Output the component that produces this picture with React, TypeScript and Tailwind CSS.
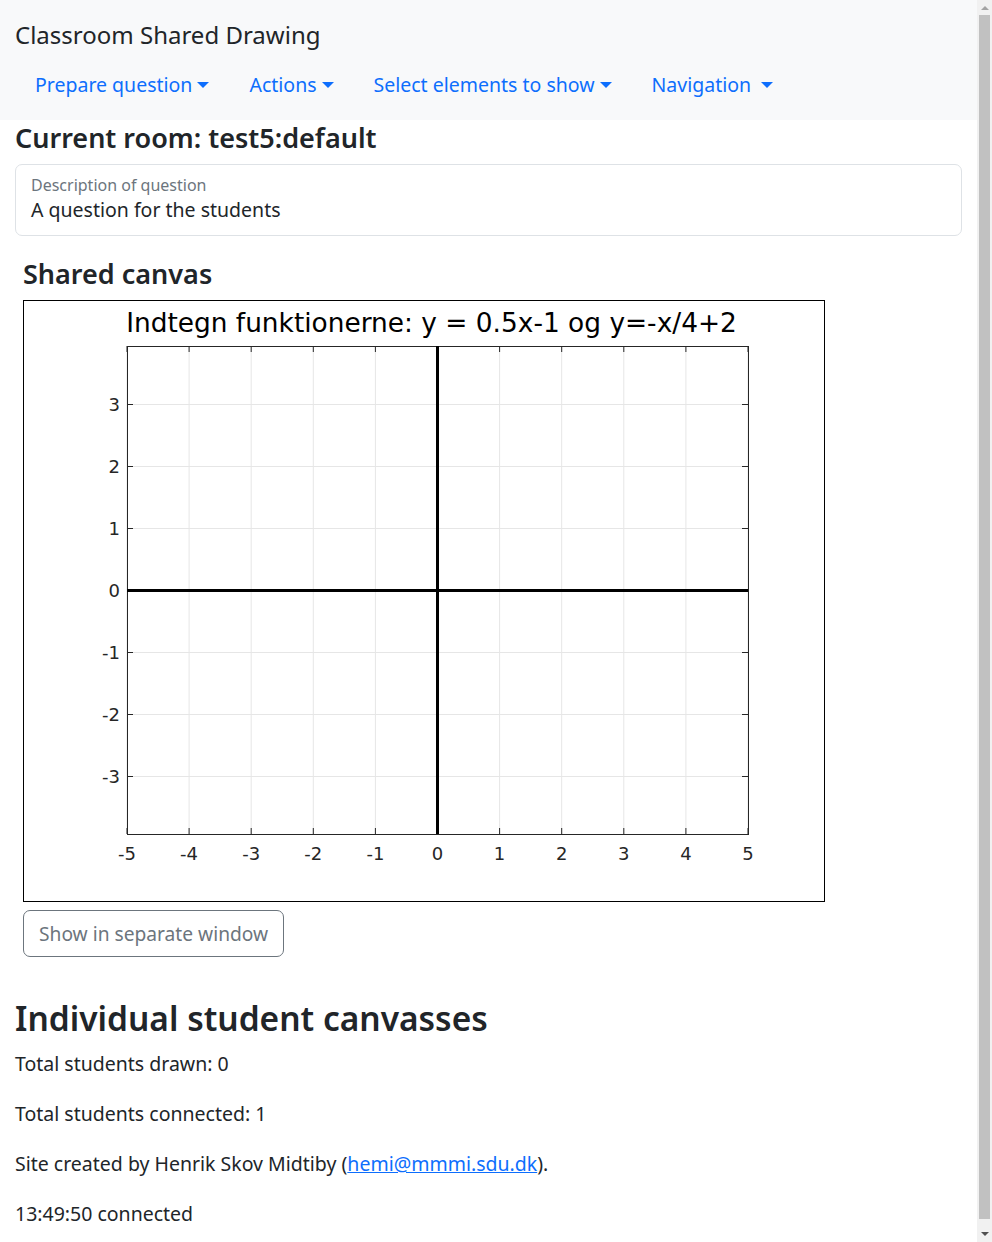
import React from "react";

const navItems = [
  { label: "Prepare question", wide: false },
  { label: "Actions", wide: false },
  { label: "Select elements to show", wide: false },
  { label: "Navigation", wide: true },
];

const X0 = 103;
const XSTEP = 62.1;
const Y0 = 289;
const YSTEP = 62;
const LEFT = 103;
const RIGHT = 724;
const TOP = 45;
const BOTTOM = 533;

const Chart = () => {
  const xs = Array.from({ length: 11 }, (_, i) => i - 5);
  const ys = [3, 2, 1, 0, -1, -2, -3];
  const tx = (v: number) => X0 + (v + 5) * XSTEP;
  const ty = (v: number) => Y0 - v * YSTEP;
  const font = "'DejaVu Sans', Verdana, sans-serif";

  return (
    <svg width="800" height="600" viewBox="0 0 800 600" className="block">
      <rect x="0" y="0" width="800" height="600" fill="#ffffff" />
      {/* grid */}
      {xs.map((v) => (
        <line key={"gx" + v} x1={tx(v)} y1={TOP} x2={tx(v)} y2={BOTTOM} stroke="#e6e6e6" strokeWidth="1" />
      ))}
      {ys.map((v) => (
        <line key={"gy" + v} x1={LEFT} y1={ty(v) + 0.5} x2={RIGHT} y2={ty(v) + 0.5} stroke="#e6e6e6" strokeWidth="1" />
      ))}
      {/* ticks */}
      {xs.map((v) => (
        <g key={"tx" + v}>
          <line x1={tx(v)} y1={BOTTOM} x2={tx(v)} y2={BOTTOM - 6} stroke="#262626" strokeWidth="1" />
          <line x1={tx(v)} y1={TOP} x2={tx(v)} y2={TOP + 6} stroke="#262626" strokeWidth="1" />
        </g>
      ))}
      {ys.map((v) => (
        <g key={"ty" + v}>
          <line x1={LEFT} y1={ty(v) + 0.5} x2={LEFT + 6} y2={ty(v) + 0.5} stroke="#262626" strokeWidth="1" />
          <line x1={RIGHT} y1={ty(v) + 0.5} x2={RIGHT - 6} y2={ty(v) + 0.5} stroke="#262626" strokeWidth="1" />
        </g>
      ))}
      {/* axes box */}
      <rect x={LEFT + 0.5} y={TOP + 0.5} width={RIGHT - LEFT} height={BOTTOM - TOP} fill="none" stroke="#262626" strokeWidth="1" />
      {/* x=0 and y=0 lines */}
      <line x1={LEFT} y1={Y0 + 0.5} x2={RIGHT} y2={Y0 + 0.5} stroke="#000000" strokeWidth="3" />
      <line x1={tx(0)} y1={TOP} x2={tx(0)} y2={BOTTOM} stroke="#000000" strokeWidth="3" />
      {/* labels */}
      {xs.map((v) => (
        <text key={"lx" + v} x={tx(v)} y={559} textAnchor="middle" fontFamily={font} fontSize="18" fill="#262626">
          {v}
        </text>
      ))}
      {ys.map((v) => (
        <text key={"ly" + v} x={96} y={ty(v) + 7} textAnchor="end" fontFamily={font} fontSize="18" fill="#262626">
          {v}
        </text>
      ))}
      <text x={407.5} y={31} textAnchor="middle" fontFamily={font} fontSize="26.4" fill="#000000">
        Indtegn funktionerne: y = 0.5x-1 og y=-x/4+2
      </text>
    </svg>
  );
};

// browser scrollbar as seen in the screenshot
const Scrollbar = () => (
  <div className="fixed top-0 right-0 w-[15px] h-[1242px] bg-[#f1f1f1] flex flex-col">
    <div className="h-[15px] flex items-center justify-center">
      <span className="w-0 h-0 border-b-[4px] border-b-[#a3a3a3] border-l-[4px] border-l-transparent border-r-[4px] border-r-transparent" />
    </div>
    <div className="mx-[2px] h-[1204px] bg-[#c1c1c1]" />
    <div className="flex-1 flex items-end justify-center pb-[6px]">
      <span className="w-0 h-0 border-t-[4px] border-t-[#505050] border-l-[4px] border-l-transparent border-r-[4px] border-r-transparent" />
    </div>
  </div>
);

const App = () => {
  return (
    <div className="bg-white text-[#212529] font-['Noto_Sans',sans-serif] text-[19.5px] leading-[1.5] pr-[15px]">
      <nav className="bg-[#f8f9fa] h-[120px] px-[15px]">
        <div className="pt-[16px] text-[24px] leading-[37px] text-[#212529]">Classroom Shared Drawing</div>
        <ul className="flex mt-[17px]">
          {navItems.map((item) => (
            <li key={item.label} className="px-[20px] leading-[30px] text-[#0d6efd]">
              {item.label}
              <span
                className={`inline-block align-[4px] w-0 h-0 border-t-[6px] border-t-[#0d6efd] border-l-[6px] border-l-transparent border-r-[6px] border-r-transparent ${
                  item.wide ? "ml-[10px]" : "ml-[5px]"
                }`}
              />
            </li>
          ))}
        </ul>
      </nav>

      <main className="px-[15px]">
        <h4 className="text-[27px] leading-[34px] font-semibold mt-[1px] mb-[9px]">Current room: test5:default</h4>

        <div className="border border-[#dee2e6] rounded-[7px] px-[15px] pt-[9px] pb-[11px]">
          <div className="text-[16px] leading-[22px] text-[#6c757d]">Description of question</div>
          <div className="leading-[28px]">A question for the students</div>
        </div>

        <section className="px-[8px] mt-[21px]">
          <h4 className="text-[27px] leading-[34px] font-semibold mb-[9px]">Shared canvas</h4>
          <div className="w-[802px] border border-black bg-white">
            <Chart />
          </div>
          <button className="mt-[8px] h-[47px] border border-[#6c757d] rounded-[7px] px-[15px] text-[#6c757d] text-[19.2px] leading-[30px]">
            Show in separate window
          </button>
        </section>

        <h2 className="mt-[40px] text-[33.5px] leading-[42px] font-semibold mb-[10px]">Individual student canvasses</h2>
        <p className="mb-[20px] leading-[30px]">Total students drawn: 0</p>
        <p className="mb-[20px] leading-[30px]">Total students connected: 1</p>
        <p className="mb-[20px] leading-[30px]">
          Site created by Henrik Skov Midtiby (
          <a href="#" className="text-[#0d6efd] underline">
            hemi@mmmi.sdu.dk
          </a>
          ).
        </p>
        <p className="mb-[20px] leading-[30px]">13:49:50 connected</p>
      </main>
      <Scrollbar />
    </div>
  );
};

export default App;
